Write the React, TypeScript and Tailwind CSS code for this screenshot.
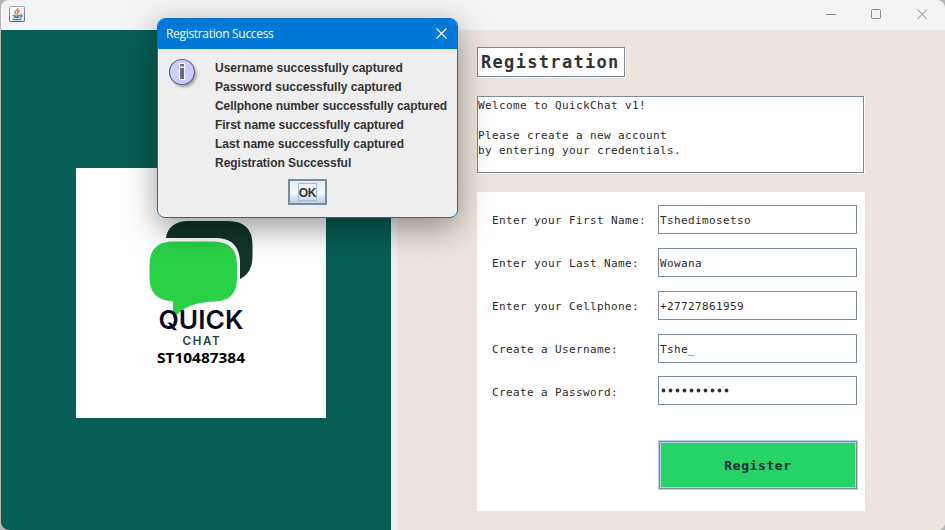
import React from "react";

const mono = "font-['DejaVu_Sans_Mono',monospace] text-[11px] tracking-[0.38px] leading-[15px] text-[#2b2b2b]";

const rows = [
  { label: "Enter your First Name:", value: "Tshedimosetso", h: "h-[43px]" },
  { label: "Enter your Last Name:", value: "Wowana", h: "h-[43px]" },
  { label: "Enter your Cellphone:", value: "+27727861959", h: "h-[43px]" },
  { label: "Create a Username:", value: "Tshe_", h: "h-[42px]" },
  { label: "Create a Password:", value: "••••••••••", h: "h-[64px]" },
];

const messages = [
  { text: "Username successfully captured", tracking: "tracking-[0.01px]" },
  { text: "Password successfully captured", tracking: "tracking-[0.02px]" },
  { text: "Cellphone number successfully captured", tracking: "tracking-[-0.07px]" },
  { text: "First name successfully captured", tracking: "tracking-[-0.04px]" },
  { text: "Last name successfully captured", tracking: "tracking-[0.01px]" },
  { text: "Registration Successful", tracking: "tracking-[-0.02px]" },
];

function JavaIcon() {
  return (
    <svg width="16" height="16" viewBox="0 0 16 16" className="block">
      <defs>
        <linearGradient id="jb" x1="0" y1="0" x2="0" y2="1">
          <stop offset="0" stopColor="#9aa9b8" />
          <stop offset="1" stopColor="#4d6a85" />
        </linearGradient>
        <linearGradient id="jf" x1="0" y1="0" x2="1" y2="1">
          <stop offset="0" stopColor="#ffffff" />
          <stop offset="1" stopColor="#dce3ea" />
        </linearGradient>
      </defs>
      <rect x="0.5" y="0.5" width="15" height="15" rx="0.8" fill="url(#jf)" stroke="url(#jb)" />
      <path d="M8.8 2.200c.8 1.800-3.300 2.600-3 4.200.2 1 1.100 1.300 1.600 2M10.800 4.400c-2 .6-2.900 1.400-2.100 2.300.5.6.2 1.200-.5 1.700" fill="none" stroke="#ea7a2c" strokeWidth="1.500" />
      <path d="M4 9.400c2 .8 5 .7 7 0M5 11.200c1.600.5 3.800.5 5.200 0M11.300 9c2.200-.3 1.900 1.700-.3 2.300M3.500 13.300c3 .5 6.500.4 8.800-.2" fill="none" stroke="#557692" strokeWidth="1.300" />
    </svg>
  );
}

function InfoIcon() {
  return (
    <svg width="32" height="32" viewBox="0 0 32 32" className="block">
      <defs>
        <filter id="ib" x="-20%" y="-20%" width="140%" height="140%">
          <feGaussianBlur stdDeviation="1.5" />
        </filter>
      </defs>
      <circle cx="16" cy="16.500" r="12.500" fill="#000" opacity="0.35" filter="url(#ib)" />
      <circle cx="14" cy="14" r="12.500" fill="#ccccff" stroke="#666699" strokeWidth="1.200" />
      <path d="M11 5h6v17h-6z" fill="#fff" />
      <path d="M12 6h4v2.500h-4zM12 10h4v11h-4z" fill="#666699" />
    </svg>
  );
}

function Logo() {
  return (
    <svg width="250" height="250" viewBox="76 168 250 250" className="block">
      <path d="M166 238C167 228 175 221 188 221H228Q252.500 221 252.500 245V256Q252.500 273 240 279V262Q239 238 216 238Z" fill="#12342b" />
      <path d="M173 241.500H213Q237 241.500 237 265V278Q237 301 215 301.500C201 302 190 304 180 312L173 318V301.500Q149.500 300 149.500 278V265Q149.500 241.500 173 241.500Z" fill="#29d147" />
      <text x="158.500" y="329" textLength="85" lengthAdjust="spacingAndGlyphs" fontFamily="Inter, sans-serif" fontWeight="600" fontSize="25.500" fill="#0a0824">QUICK</text>
      <text x="182.500" y="344.500" textLength="37" fontFamily="Inter, sans-serif" fontWeight="600" fontSize="11.500" fill="#1d4438">CHAT</text>
      <text x="157" y="362.500" textLength="88" lengthAdjust="spacingAndGlyphs" fontFamily="'Noto Sans', sans-serif" fontWeight="700" fontSize="15" fill="#000">ST10487384</text>
    </svg>
  );
}

function Field({ value, dots }: { value: string; dots?: boolean }) {
  return (
    <div className="flex h-[29px] w-[199px] items-center border border-[#7a8a99] bg-white pl-px">
      {dots ? (
        <svg width="72" height="5" viewBox="0 0 72 5">
          {Array.from(value).map((_, i) => (
            <circle key={i} cx={3.500 + i * 7} cy="2.500" r="1.900" fill="#333333" />
          ))}
        </svg>
      ) : (
        <span className={`pt-px ${mono}`}>{value}</span>
      )}
    </div>
  );
}

function Dialog() {
  return (
    <section className="absolute left-[157px] top-[18px] h-[200px] w-[301px] overflow-hidden rounded-[8px] border border-[#0a72c4] bg-[#eeeeee] font-['Liberation_Sans',sans-serif]">
      <header className="flex h-[30px] items-center justify-between bg-[#0078d7] pl-2 pr-[10px]">
        <span className="whitespace-nowrap font-['Open_Sans',sans-serif] text-[12px] tracking-[-0.32px] text-white">Registration Success</span>
        <svg width="11" height="11" viewBox="0 0 11 11" className="-mt-[2px]">
          <path d="M.5.5l10 10M10.500.5l-10 10" stroke="#fff" strokeWidth="1.100" />
        </svg>
      </header>
      <div className="flex pl-[10px] pt-[9px]">
        <InfoIcon />
        <div className="ml-[15px] mt-px whitespace-nowrap text-[12px] font-bold leading-[19px] text-[#333333]">
          {messages.map((m) => (
            <p key={m.text} className={m.tracking}>{m.text}</p>
          ))}
        </div>
      </div>
      <button className="ml-[130px] mt-[6px] flex h-[26px] w-[39px] items-center justify-center border-2 border-[#7a8a99] bg-linear-to-b from-[#e3ebf3] via-[#f6f9fc] to-[#b8cfe5]">
        <span className="flex h-[18px] w-[19px] items-center justify-center border border-[#a3b8cc] pt-px text-[12px] font-bold tracking-[-0.3px] text-[#333333]">OK</span>
      </button>
    </section>
  );
}

export default function App() {
  return (
    <div className="relative h-[530px] w-[945px] overflow-hidden bg-[#b5b5b5]">
      <div className="ml-px flex h-[530px] flex-col overflow-hidden rounded-[8px] bg-[#f3f3f3]">
        <header className="flex h-[30px] shrink-0 items-center justify-between pl-2 pr-[17px]">
          <div className="-mt-[2px]"><JavaIcon /></div>
          <svg width="102" height="11" viewBox="0 0 102 11" fill="none" stroke="#8a8a8a" className="-mt-[2px]">
            <path d="M0 5.500h10" />
            <rect x="45.500" y="0.500" width="9" height="9" rx="1" />
            <path d="M91.500.5l9.500 9.500M101 .5l-9.500 9.500" />
          </svg>
        </header>
        <main className="flex flex-1">
          <aside className="flex w-[390px] flex-col bg-[#075e54] pl-[75px] pt-[138px]">
            <div className="h-[250px] w-[250px] bg-white"><Logo /></div>
          </aside>
          <div className="w-[6px] bg-[#eeeeee]" />
          <section className="flex-1 bg-[#ece5dd] pl-[80px] pt-[17px]">
            <h1 className="flex h-[30px] w-[148px] items-center whitespace-nowrap border border-[#7a8a99] bg-white pl-[3px] pt-px font-['DejaVu_Sans_Mono',monospace] text-[17px] font-bold tracking-[1.32px] text-[#333333] shadow-[1px_1px_0_#fff]">Registration</h1>
            <div className={`mt-[19px] h-[77px] w-[387px] whitespace-pre border border-[#7a8a99] bg-white pt-px shadow-[1px_1px_0_#fff] ${mono}`}>
              {"Welcome to QuickChat v1!\n\nPlease create a new account\nby entering your credentials."}
            </div>
            <form className="mt-[19px] h-[319px] w-[388px] bg-white pt-[13px]">
              {rows.map((r, i) => (
                <div key={r.label} className={`flex items-start ${r.h}`}>
                  <label className={`w-[181px] shrink-0 whitespace-nowrap pl-[15px] ${i === 4 ? "pt-[9px]" : "pt-2"} ${mono}`}>{r.label}</label>
                  <Field value={r.value} dots={i === 4} />
                </div>
              ))}
              <button type="button" className="ml-[181px] flex h-[50px] w-[200px] items-center justify-center border border-[#b8cfe5] bg-[#7a8a99] p-px">
                <span className="flex h-full w-full items-center justify-center border border-[#b8cfe5] bg-[#25d366] pt-px font-['DejaVu_Sans_Mono',monospace] text-[13px] font-bold tracking-[0.6px] text-[#1b2b3b]">Register</span>
              </button>
            </form>
          </section>
        </main>
      </div>
      <div className="pointer-events-none absolute left-[157px] top-[18px] h-[200px] w-[301px] rounded-[8px] shadow-[0_10px_32px_rgba(0,0,0,0.4)]" />
      <Dialog />
    </div>
  );
}
